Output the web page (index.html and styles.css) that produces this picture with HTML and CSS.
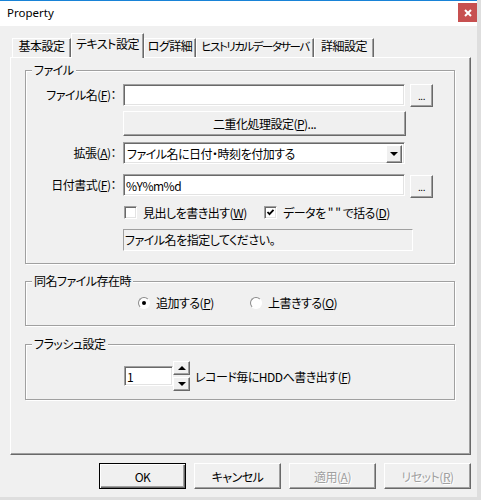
FILE: index.html
```html
<!DOCTYPE html>
<html lang="ja">
<head>
    <meta charset="UTF-8">
    <meta name="viewport" content="width=device-width, initial-scale=1.0">
    <title>Property</title>
    <link rel="stylesheet" href="styles.css">
</head>
<body>
    <div class="window">
        <div class="titlebar">
            <span class="title">Property</span>
            <span class="close">
                <svg width="8" height="8" viewBox="0 0 8 8"><path d="M1 1L7 7M7 1L1 7" stroke="#fff" stroke-width="2"/></svg>
            </span>
        </div>

        <div class="client">
            <div class="tabs">
                <div class="tab tab-basic">基本設定</div>
                <div class="tab tab-text active">テキスト設定</div>
                <div class="tab tab-log">ログ詳細</div>
                <div class="tab tab-hist">ヒストリカルデータサーバ</div>
                <div class="tab tab-detail">詳細設定</div>
            </div>

            <div class="panel">
                <!-- ファイル -->
                <div class="group group-file">
                    <span class="legend">ファイル</span>

                    <div class="row row-name">
                        <span class="label">ファイル名(<u>F</u>)：</span>
                        <input class="edit" type="text" value="">
                        <button class="btn btn-browse">...</button>
                    </div>

                    <div class="row row-dup">
                        <button class="btn btn-dup">二重化処理設定(<u>P</u>)...</button>
                    </div>

                    <div class="row row-ext">
                        <span class="label">拡張(<u>A</u>)：</span>
                        <div class="combo">
                            <span class="combo-text">ファイル名に日付・時刻を付加する</span>
                            <span class="combo-drop"><span class="arrow-down"></span></span>
                        </div>
                    </div>

                    <div class="row row-date">
                        <span class="label">日付書式(<u>F</u>)：</span>
                        <input class="edit" type="text" value="%Y%m%d">
                        <button class="btn btn-browse">...</button>
                    </div>

                    <div class="row row-checks">
                        <span class="check check-header">
                            <span class="checkbox"></span>
                            <span>見出しを書き出す(<u>W</u>)</span>
                        </span>
                        <span class="check">
                            <span class="checkbox checked">
                                <svg width="9" height="9" viewBox="0 0 9 9"><path d="M1.5 4L3.5 6.2L7.5 1.8" fill="none" stroke="#000" stroke-width="1.8"/></svg>
                            </span>
                            <span>データを " " で括る(<u>D</u>)</span>
                        </span>
                    </div>

                    <div class="row row-status">
                        <div class="status">ファイル名を指定してください。</div>
                    </div>
                </div>

                <!-- 同名ファイル存在時 -->
                <div class="group group-exists">
                    <span class="legend">同名ファイル存在時</span>
                    <div class="row row-radios">
                        <span class="option option-append">
                            <span class="radio checked"></span>
                            <span>追加する(<u>P</u>)</span>
                        </span>
                        <span class="option">
                            <span class="radio"></span>
                            <span>上書きする(<u>O</u>)</span>
                        </span>
                    </div>
                </div>

                <!-- フラッシュ設定 -->
                <div class="group group-flush">
                    <span class="legend">フラッシュ設定</span>
                    <div class="row row-flush">
                        <input class="edit edit-count" type="text" value="1">
                        <span class="spin">
                            <span class="spin-btn"><span class="arrow-up"></span></span>
                            <span class="spin-btn"><span class="arrow-down"></span></span>
                        </span>
                        <span class="flush-text">レコード毎にHDDへ書き出す(<u>F</u>)</span>
                    </div>
                </div>
            </div>

            <div class="buttons">
                <button class="btn btn-dialog btn-default">OK</button>
                <button class="btn btn-dialog">キャンセル</button>
                <button class="btn btn-dialog disabled">適用(<u>A</u>)</button>
                <button class="btn btn-dialog disabled">リセット(<u>R</u>)</button>
            </div>
        </div>
    </div>
</body>
</html>
```

FILE: styles.css
```css
body {
    margin: 0;
    background-color: #dedede;
    font-family: "Noto Sans CJK JP", "Noto Sans", sans-serif;
    font-size: 12px;
    font-feature-settings: "palt";
    letter-spacing: -0.5px;
    color: #000;
}

.window {
    width: 477px;
    height: 497px;
    background-color: #f0f0f0;
    display: flex;
    flex-direction: column;
}

/* title bar */
.titlebar {
    height: 26px;
    box-sizing: border-box;
    border-top: 1px solid #1883d7;
    background-color: #fff;
    display: flex;
    align-items: flex-start;
    padding-left: 7px;
}

.title {
    flex: 1;
    font-family: "Noto Sans", sans-serif;
    font-size: 11.5px;
    letter-spacing: 0;
    line-height: 24px;
}

.close {
    width: 19px;
    height: 19px;
    margin-top: 2px;
    background-color: #c75050;
    display: flex;
    align-items: center;
    justify-content: center;
}

.client {
    padding: 7px 6px 0 10px;
}

/* tabs */
.tabs {
    display: flex;
    align-items: flex-end;
    height: 24px;
    padding-left: 2px;
}

.tab {
    height: 19px;
    box-sizing: border-box;
    border-top: 1px solid #fff;
    border-left: 1px solid #fff;
    border-right: 1px solid #696969;
    box-shadow: inset -1px 0 0 #a0a0a0;
    text-align: center;
    line-height: 14px;
    white-space: nowrap;
    overflow: hidden;
}

.tab.active {
    height: 25px;
    margin-bottom: -1px;
    padding-top: 3px;
    position: relative;
    z-index: 1;
    background-color: #f0f0f0;
}

.tab-basic { width: 59px; }
.tab-text { width: 73px; }
.tab-log { width: 52px; }
.tab-hist { width: 118px; font-size: 11.5px; letter-spacing: -1.5px; }
.tab-detail { width: 60px; }

.panel {
    height: 398px;
    box-sizing: border-box;
    border-top: 1px solid #fff;
    border-left: 1px solid #fff;
    border-right: 1px solid #696969;
    border-bottom: 1px solid #696969;
    box-shadow: inset -1px -1px 0 #a0a0a0;
    padding: 12px 15px 0 14px;
}

/* group boxes */
.group {
    position: relative;
    border: 1px solid #a0a0a0;
    box-shadow: inset 1px 1px 0 #fff, 1px 1px 0 #fff;
}

.legend {
    position: absolute;
    top: -8px;
    left: 6px;
    padding: 0 2px;
    line-height: 14px;
    background-color: #f0f0f0;
}

.group-file {
    padding: 13px 0 12px;
}

.group-exists {
    margin-top: 17px;
    padding: 14px 0 16px;
}

.group-flush {
    margin-top: 18px;
    padding: 16px 0 8px;
}

.row {
    display: flex;
    align-items: flex-start;
}

.label {
    width: 97px;
    box-sizing: border-box;
    padding-right: 7px;
    text-align: right;
    line-height: 22px;
    white-space: nowrap;
}

/* controls */
.edit {
    width: 282px;
    height: 22px;
    box-sizing: border-box;
    margin: 0;
    padding: 0 2px;
    border: 1px solid;
    border-color: #a0a0a0 #fff #fff #a0a0a0;
    box-shadow: inset 1px 1px 0 #696969, inset -1px -1px 0 #e3e3e3;
    background-color: #fff;
    font-family: inherit;
    font-size: 12px;
    font-feature-settings: "palt";
    letter-spacing: inherit;
    color: #000;
    outline: none;
}

.btn {
    margin: 0;
    padding: 0;
    box-sizing: border-box;
    border: 1px solid;
    border-color: #fff #696969 #696969 #fff;
    box-shadow: inset -1px -1px 0 #a0a0a0;
    background-color: #f0f0f0;
    font-family: inherit;
    font-size: 12px;
    font-feature-settings: "palt";
    letter-spacing: inherit;
    color: #000;
    white-space: nowrap;
}

.btn-browse {
    width: 23px;
    height: 23px;
    margin-left: 5px;
    font-size: 10px;
    line-height: 18px;
}

.row-dup {
    margin-top: 4px;
    padding-left: 97px;
}

.btn-dup {
    width: 283px;
    height: 25px;
}

.row-ext {
    margin-top: 6px;
}

.combo {
    width: 282px;
    height: 22px;
    box-sizing: border-box;
    padding: 2px;
    border: 1px solid;
    border-color: #a0a0a0 #fff #fff #a0a0a0;
    box-shadow: inset 1px 1px 0 #696969, inset -1px -1px 0 #e3e3e3;
    background-color: #fff;
    display: flex;
}

.combo-text {
    flex: 1;
    line-height: 18px;
    padding-left: 1px;
}

.combo-drop {
    width: 16px;
    height: 18px;
    box-sizing: border-box;
    border: 1px solid;
    border-color: #fff #696969 #696969 #fff;
    box-shadow: inset -1px -1px 0 #a0a0a0;
    background-color: #f0f0f0;
    display: flex;
    align-items: center;
    justify-content: center;
}

.arrow-down {
    width: 0;
    height: 0;
    border-left: 4px solid transparent;
    border-right: 4px solid transparent;
    border-top: 4px solid #000;
}

.arrow-up {
    width: 0;
    height: 0;
    border-left: 4px solid transparent;
    border-right: 4px solid transparent;
    border-bottom: 4px solid #000;
}

.row-date {
    margin-top: 10px;
}

.row-date .btn-browse {
    margin-top: 1px;
}

.row-checks {
    margin-top: 8px;
    padding-left: 98px;
    line-height: 13px;
}

.check {
    display: flex;
    align-items: center;
    gap: 6px;
}

.check-header {
    width: 140px;
}

.checkbox {
    width: 13px;
    height: 13px;
    box-sizing: border-box;
    border: 1px solid;
    border-color: #a0a0a0 #fff #fff #a0a0a0;
    box-shadow: inset 1px 1px 0 #696969, inset -1px -1px 0 #e3e3e3;
    background-color: #fff;
    display: flex;
    align-items: center;
    justify-content: center;
}

.row-status {
    margin-top: 10px;
    padding-left: 97px;
}

.status {
    width: 290px;
    height: 22px;
    box-sizing: border-box;
    border: 1px solid;
    border-color: #a0a0a0 #fff #fff #a0a0a0;
    padding-left: 1px;
    line-height: 20px;
}

/* radio buttons */
.row-radios {
    padding-left: 112px;
    line-height: 13px;
}

.option {
    display: flex;
    align-items: center;
    gap: 6px;
}

.option-append {
    width: 112px;
}

.radio {
    width: 12px;
    height: 12px;
    box-sizing: border-box;
    border: 1px solid;
    border-color: #8a8a8a #fff #fff #8a8a8a;
    border-radius: 50%;
    background-color: #fff;
    display: flex;
    align-items: center;
    justify-content: center;
}

.radio.checked::after {
    content: "";
    width: 4px;
    height: 4px;
    border-radius: 50%;
    background-color: #000;
}

/* flush */
.row-flush {
    padding-left: 98px;
    height: 30px;
    align-items: center;
}

.edit-count {
    width: 49px;
    height: 20px;
}

.spin {
    display: flex;
    flex-direction: column;
    gap: 2px;
}

.spin-btn {
    width: 17px;
    height: 14px;
    box-sizing: border-box;
    border: 1px solid;
    border-color: #fff #696969 #696969 #fff;
    box-shadow: inset -1px -1px 0 #a0a0a0;
    background-color: #f0f0f0;
    display: flex;
    align-items: center;
    justify-content: center;
}

.flush-text {
    margin-left: 5px;
}

/* dialog buttons */
.buttons {
    display: flex;
    justify-content: flex-end;
    gap: 8px;
    margin-top: 8px;
}

.btn-dialog {
    width: 87px;
    height: 26px;
}

.btn-default {
    border: 1px solid #000;
    box-shadow: inset 1px 1px 0 #fff, inset -1px -1px 0 #696969, inset -2px -2px 0 #a0a0a0;
}

.btn-dialog.disabled {
    color: #a0a0a0;
    text-shadow: 1px 1px 0 #fff;
}
```
